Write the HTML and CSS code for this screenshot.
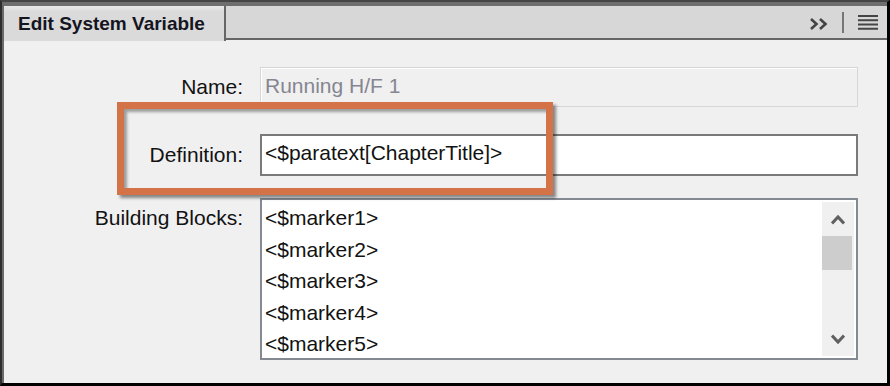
FILE: index.html
```html
<!DOCTYPE html>
<html>
<head>
<meta charset="utf-8">
<link rel="stylesheet" href="styles.css">
</head>
<body>
<div class="window">
  <div class="inner">
    <div class="header">
      <div class="tab">Edit System Variable</div>
      <div class="bar">
        <svg class="more" width="18" height="12" viewBox="0 0 18 12"><path d="M1 1 L6.5 6 L1 11 M10 1 L15.5 6 L10 11" fill="none" stroke="#444" stroke-width="2.6"/></svg>
        <span class="sep"></span>
        <svg class="menu" width="20" height="15" viewBox="0 0 20 15"><path d="M0 1H20M0 5.3H20M0 9.6H20M0 13.8H20" stroke="#444" stroke-width="2"/></svg>
      </div>
    </div>
    <div class="content">
      <div class="row r1">
        <label class="lbl">Name:</label>
        <div class="field disabled">Running H/F 1</div>
      </div>
      <div class="row r2">
        <label class="lbl">Definition:</label>
        <div class="field edit">&lt;$paratext[ChapterTitle]&gt;</div>
      </div>
      <div class="row r3">
        <label class="lbl top">Building Blocks:</label>
        <div class="list">
          <ul class="items">
            <li>&lt;$marker1&gt;</li>
            <li>&lt;$marker2&gt;</li>
            <li>&lt;$marker3&gt;</li>
            <li>&lt;$marker4&gt;</li>
            <li>&lt;$marker5&gt;</li>
          </ul>
          <div class="scroll">
            <div class="sbtn"><svg width="14" height="11" viewBox="0 0 14 11"><path d="M1 9.5 L7 3 L13 9.5" fill="none" stroke="#606060" stroke-width="3"/></svg></div>
            <div class="thumb"></div>
            <div class="track"></div>
            <div class="sbtn"><svg width="14" height="11" viewBox="0 0 14 11"><path d="M1 1.5 L7 8 L13 1.5" fill="none" stroke="#606060" stroke-width="3"/></svg></div>
          </div>
        </div>
      </div>
    </div>
  </div>
</div>
<div class="callout"></div>
</body>
</html>
```
FILE: styles.css
```css
html, body {
  margin: 0;
  width: 890px;
  height: 386px;
  overflow: hidden;
  background: #f0f0f0;
}
body {
  position: relative;
  font-family: "Liberation Sans", Arial, sans-serif;
  color: #121212;
}
.window {
  box-sizing: border-box;
  width: 890px;
  height: 386px;
  border-style: solid;
  border-color: #454545 #000 #000 #2e2e2e;
  border-width: 2px 3px 3px 2px;
  display: flex;
  flex-direction: column;
}
.inner {
  flex: 1;
  display: flex;
  flex-direction: column;
  border-top: 4px solid #6e6e6e;
  border-left: 2px solid #6a6a6a;
  background: #f0f0f0;
}
.header {
  display: flex;
  height: 35px;
}
.tab {
  box-sizing: border-box;
  width: 222px;
  height: 35px;
  padding-left: 14px;
  border-right: 2px solid #666;
  background: linear-gradient(#e8e8e8, #dadada 6px, #dadada);
  font-weight: bold;
  font-size: 19px;
  line-height: 35px;
  color: #15151f;
  white-space: nowrap;
}
.bar {
  box-sizing: border-box;
  flex: 1;
  height: 34px;
  background: #d7d7d7;
  border-bottom: 2px solid #666;
  display: flex;
  align-items: center;
  justify-content: flex-end;
  padding-right: 9px;
}
.more {
  margin-top: 3px;
  display: block;
}
.sep {
  width: 2px;
  height: 21px;
  background: #777;
  margin: 0 14px;
}
.menu {
  display: block;
}
.content {
  flex: 1;
  padding-top: 26px;
}
.row {
  display: flex;
  align-items: center;
  gap: 17px;
}
.r2 { margin-top: 27px; }
.r3 { margin-top: 22px; align-items: flex-start; }
.lbl {
  width: 239px;
  text-align: right;
  font-size: 21px;
  white-space: nowrap;
}
.lbl.top {
  line-height: 31.6px;
  padding-top: 4px;
}
.field {
  box-sizing: border-box;
  width: 598px;
  font-size: 21px;
  padding-left: 4px;
  white-space: nowrap;
}
.disabled {
  height: 40px;
  line-height: 36px;
  border: 1px solid #d6d6d6;
  box-shadow: inset 1px 1px 0 #fff;
  color: #868690;
}
.edit {
  height: 42px;
  line-height: 34px;
  padding-bottom: 4px;
  border: 2px solid #7a7a7a;
  background: #fff;
  padding-left: 3px;
}
.list {
  box-sizing: border-box;
  width: 598px;
  height: 162px;
  border: 2px solid #858a92;
  background: #fff;
  display: flex;
  overflow: hidden;
}
.items {
  flex: 1;
  list-style: none;
  margin: 0;
  padding: 2px 0 0 3px;
  font-size: 21px;
  line-height: 31.6px;
}
.scroll {
  width: 32px;
  margin: 2px 2px 2px 0;
  background: #f0f0f0;
  display: flex;
  flex-direction: column;
}
.sbtn {
  height: 34px;
  display: flex;
  align-items: center;
  justify-content: center;
}
.thumb {
  height: 34px;
  width: 30px;
  background: #cdcdcd;
}
.track { flex: 1; }
.callout {
  position: absolute;
  left: 117px;
  top: 102px;
  width: 436px;
  height: 93px;
  box-sizing: border-box;
  border: 7px solid #d47347;
  box-shadow: 3px 3px 3px rgba(0,0,0,0.45), inset 3px 3px 3px rgba(0,0,0,0.35);
}
```
